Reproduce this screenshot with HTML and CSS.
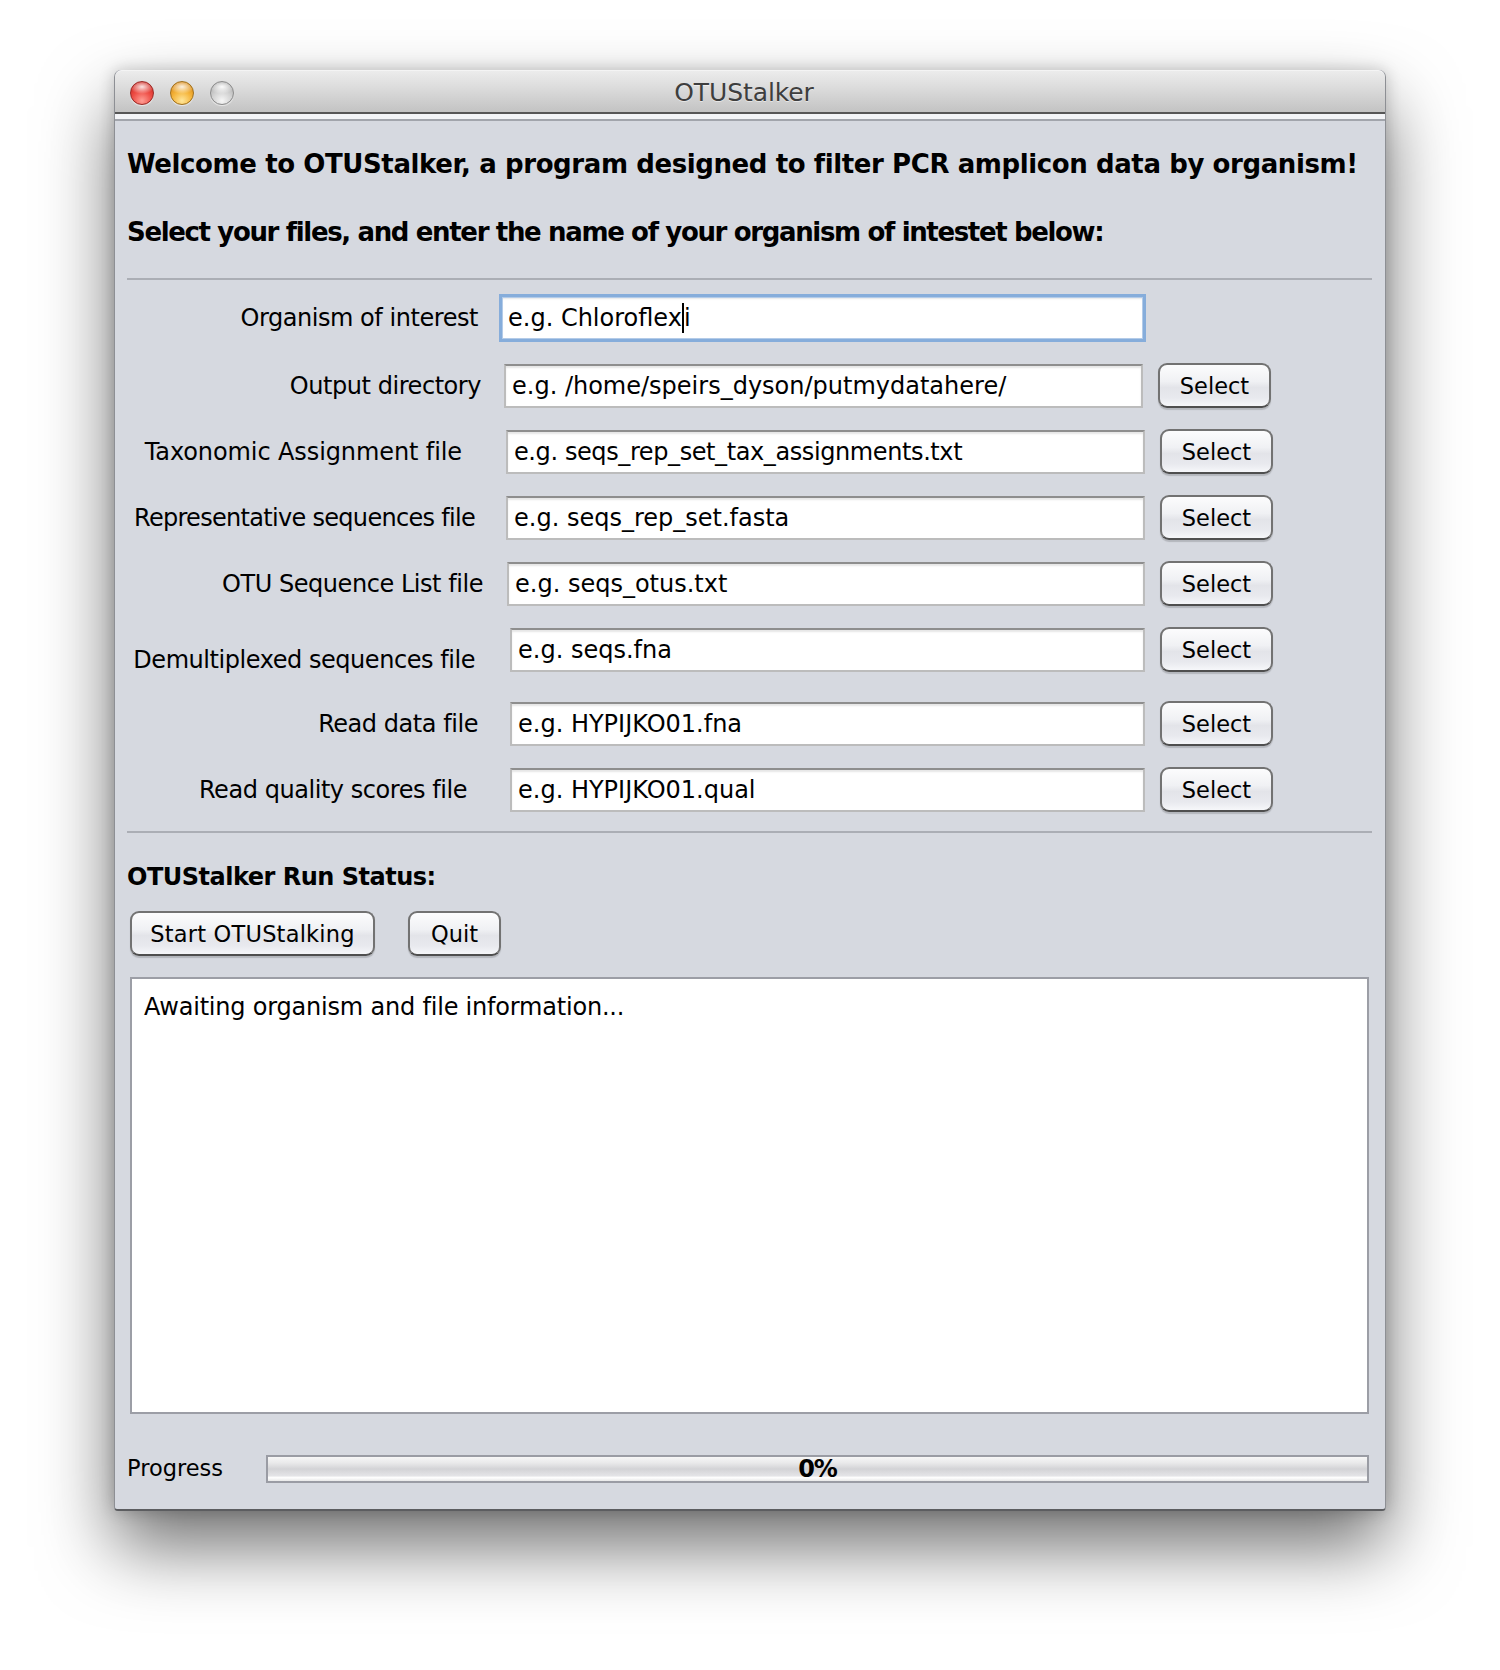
FILE: index.html
```html
<!DOCTYPE html>
<html lang="en">
<head>
<meta charset="utf-8">
<title>OTUStalker</title>
<link rel="stylesheet" href="styles.css">
</head>
<body>
<div class="window">
  <div class="titlebar">
    <div class="lights">
      <span class="light red"></span>
      <span class="light yellow"></span>
      <span class="light gray"></span>
    </div>
    <div class="title">OTUStalker</div>
    <div class="spacer"></div>
  </div>
  <div class="strip"></div>
  <div class="content">
    <h1 class="heading h-welcome">Welcome to OTUStalker, a program designed to filter PCR amplicon data by organism!</h1>
    <h2 class="heading h-select">Select your files, and enter the name of your organism of intestet below:</h2>
    <div class="sep sep-top"></div>
    <div class="form">
      <div class="row r1">
        <span class="lbl">Organism of interest</span>
        <div class="field focus">e.g. Chloroflex<span class="caret"></span>i</div>
      </div>
      <div class="row r2">
        <span class="lbl">Output directory</span>
        <div class="field">e.g. /home/speirs_dyson/putmydatahere/</div>
        <button class="btn btn-select">Select</button>
      </div>
      <div class="row r3">
        <span class="lbl">Taxonomic Assignment file</span>
        <div class="field">e.g. seqs_rep_set_tax_assignments.txt</div>
        <button class="btn btn-select">Select</button>
      </div>
      <div class="row r4">
        <span class="lbl">Representative sequences file</span>
        <div class="field">e.g. seqs_rep_set.fasta</div>
        <button class="btn btn-select">Select</button>
      </div>
      <div class="row r5">
        <span class="lbl">OTU Sequence List file</span>
        <div class="field">e.g. seqs_otus.txt</div>
        <button class="btn btn-select">Select</button>
      </div>
      <div class="row r6">
        <span class="lbl">Demultiplexed sequences file</span>
        <div class="field">e.g. seqs.fna</div>
        <button class="btn btn-select">Select</button>
      </div>
      <div class="row r7">
        <span class="lbl">Read data file</span>
        <div class="field">e.g. HYPIJKO01.fna</div>
        <button class="btn btn-select">Select</button>
      </div>
      <div class="row r8">
        <span class="lbl">Read quality scores file</span>
        <div class="field">e.g. HYPIJKO01.qual</div>
        <button class="btn btn-select">Select</button>
      </div>
    </div>
    <div class="sep sep-bottom"></div>
    <div class="status-title">OTUStalker Run Status:</div>
    <div class="actions">
      <button class="btn btn-start">Start OTUStalking</button>
      <button class="btn btn-quit">Quit</button>
    </div>
    <div class="log">Awaiting organism and file information...</div>
    <div class="progress-row">
      <span class="progress-label">Progress</span>
      <div class="bar"><span class="bar-text">0%</span></div>
    </div>
  </div>
</div>
</body>
</html>
```
FILE: styles.css
```css
html, body {
  margin: 0;
  padding: 0;
  background: #ffffff;
}
body {
  width: 1500px;
  height: 1670px;
  overflow: hidden;
  font-family: "DejaVu Sans", "Liberation Sans", sans-serif;
  color: #000;
}
.window {
  box-sizing: border-box;
  margin: 70px 0 0 114px;
  width: 1272px;
  height: 1441px;
  background: #d6d9e0;
  border-radius: 7px 7px 4px 4px;
  border-right: 1px solid #8d8f94;
  border-left: 1px solid #8d8f94;
  border-bottom: 2px solid #5c5d60;
  box-shadow: 0 36px 72px rgba(0, 0, 0, 0.56), 0 0 16px rgba(0, 0, 0, 0.2);
  display: flex;
  flex-direction: column;
  overflow: hidden;
}
.titlebar {
  box-sizing: border-box;
  height: 44px;
  flex: none;
  border-bottom: 2px solid #565656;
  border-top: 1px solid #f4f4f4;
  border-radius: 7px 7px 0 0;
  background: linear-gradient(#ececec, #dadada 45%, #c3c3c3);
  display: grid;
  grid-template-columns: 1fr auto 1fr;
  align-items: center;
}
.lights {
  display: flex;
  gap: 16px;
  padding-left: 15px;
  padding-top: 2px;
}
.light {
  width: 24px;
  height: 24px;
  border-radius: 50%;
  box-sizing: border-box;
  box-shadow: 0 1px 1px rgba(255, 255, 255, 0.6);
}
.light.red {
  border: 1px solid #9a2a26;
  background:
    radial-gradient(ellipse 55% 32% at 50% 22%, rgba(255, 255, 255, 0.85), rgba(255, 255, 255, 0) 100%),
    radial-gradient(circle at 50% 85%, #ff9d94 0, #ee4f47 45%, #d22b25 80%);
}
.light.yellow {
  border: 1px solid #a0701c;
  background:
    radial-gradient(ellipse 55% 32% at 50% 22%, rgba(255, 255, 255, 0.85), rgba(255, 255, 255, 0) 100%),
    radial-gradient(circle at 50% 85%, #ffe69a 0, #f5b53c 45%, #dc8d18 80%);
}
.light.gray {
  border: 1px solid #8c8c8c;
  background:
    radial-gradient(ellipse 55% 32% at 50% 22%, rgba(255, 255, 255, 0.95), rgba(255, 255, 255, 0) 100%),
    radial-gradient(circle at 50% 85%, #f6f6f6 0, #d2d2d2 45%, #b0b0b0 80%);
}
.title {
  font-size: 25px;
  color: #3e3e3e;
  margin-right: 12px;
  padding-top: 2px;
  letter-spacing: -0.1px;
  text-shadow: 0 1px 0 rgba(255, 255, 255, 0.5);
}
.strip {
  flex: none;
  height: 5px;
  background: #f3f4f7;
  border-bottom: 2px solid #a2a5ac;
}
.content {
  flex: 1;
  padding: 0 13px 0 12px;
  display: flex;
  flex-direction: column;
}
.heading {
  margin: 0;
  font-weight: bold;
  line-height: 34px;
  white-space: nowrap;
}
.h-welcome {
  margin-top: 26px;
  font-size: 26px;
  letter-spacing: -0.4px;
}
.h-select {
  margin-top: 34px;
  font-size: 26px;
  letter-spacing: -1.35px;
}
.sep {
  height: 2px;
  background: #abaeb5;
}
.sep-top {
  margin-top: 29px;
}
.form {
  margin-top: 14px;
  display: flex;
  flex-direction: column;
  gap: 21px;
}
.row {
  display: flex;
  align-items: center;
  height: 45px;
}
.lbl {
  box-sizing: border-box;
  flex: none;
  text-align: right;
  font-size: 24px;
  letter-spacing: -0.45px;
  white-space: nowrap;
}
.field {
  box-sizing: border-box;
  height: 44px;
  background: #fff;
  border: 2px solid #bcbcbc;
  border-top-color: #8e8e8e;
  box-shadow: inset 0 2px 2px rgba(0, 0, 0, 0.1);
  font-size: 24px;
  padding-left: 6px;
  display: flex;
  align-items: center;
  white-space: nowrap;
}
.field.focus {
  height: 48px;
  width: 647px;
  border: 3px solid #86addb;
  box-shadow: inset 0 0 0 1px #b3cbe8, inset 0 2px 2px rgba(0, 0, 0, 0.1);
  padding-left: 6px;
}
.caret {
  display: inline-block;
  width: 2px;
  height: 30px;
  background: #000;
}
.btn {
  box-sizing: border-box;
  flex: none;
  height: 45px;
  margin: 0;
  padding: 0;
  border: 2px solid #727272;
  border-bottom-color: #4f4f4f;
  border-radius: 9px;
  background: linear-gradient(#fcfcfd, #f0f1f4 40%, #e3e4e9 55%, #e8e9ee 80%, #f6f7fa);
  box-shadow: 0 2px 1px rgba(0, 0, 0, 0.16);
  font-family: "DejaVu Sans", "Liberation Sans", sans-serif;
  font-size: 22.5px;
  color: #000;
  text-align: center;
}
.btn-select {
  width: 113px;
  margin-left: 15px;
}
.r1 { height: 48px; }
.r1 .lbl { width: 372px; padding-right: 21px; }
.r2 .lbl { width: 377px; padding-right: 23px; }
.r2 .field { width: 639px; }
.r3 .lbl { width: 379px; padding-right: 44px; letter-spacing: -0.1px; }
.r3 .field { width: 639px; letter-spacing: -0.4px; }
.r4 .lbl { width: 379px; padding-right: 31px; letter-spacing: -0.7px; }
.r4 .field { width: 639px; }
.r5 .lbl { width: 380px; padding-right: 24px; }
.r5 .field { width: 638px; }
.r6 .lbl { width: 383px; padding-right: 35px; padding-top: 20px; }
.r6 .field { width: 635px; }
.r7 { margin-top: 8px; }
.r7 .lbl { width: 383px; padding-right: 32px; }
.r7 .field { width: 635px; }
.r8 .lbl { width: 383px; padding-right: 43px; }
.r8 .field { width: 635px; }
.sep-bottom {
  margin-top: 19px;
}
.status-title {
  margin-top: 27px;
  font-weight: bold;
  font-size: 24px;
  line-height: 34px;
  letter-spacing: -0.5px;
}
.actions {
  margin-top: 17px;
  margin-left: 3px;
  display: flex;
  gap: 33px;
}
.btn-start {
  width: 245px;
  letter-spacing: 0.2px;
}
.btn-quit {
  width: 93px;
}
.log {
  box-sizing: border-box;
  margin-top: 21px;
  margin-left: 3px;
  width: 1239px;
  height: 437px;
  background: #fff;
  border: 2px solid #9c9ea6;
  padding: 11px 0 0 12px;
  font-size: 24px;
  line-height: 34px;
  letter-spacing: -0.2px;
}
.progress-row {
  margin-top: 41px;
  display: flex;
  align-items: center;
}
.progress-label {
  width: 139px;
  font-size: 22.5px;
  padding-bottom: 2px;
}
.bar {
  box-sizing: border-box;
  width: 1103px;
  height: 28px;
  border: 2px solid #9a9ca4;
  background: linear-gradient(#f7f7f7 0, #e9e9ea 25%, #d3d3d6 50%, #e4e4e7 78%, #ffffff 86%, #e8e8e8 100%);
  display: flex;
  align-items: center;
  justify-content: center;
}
.bar-text {
  font-weight: bold;
  font-size: 24px;
  line-height: 24px;
  letter-spacing: -1px;
}
```
